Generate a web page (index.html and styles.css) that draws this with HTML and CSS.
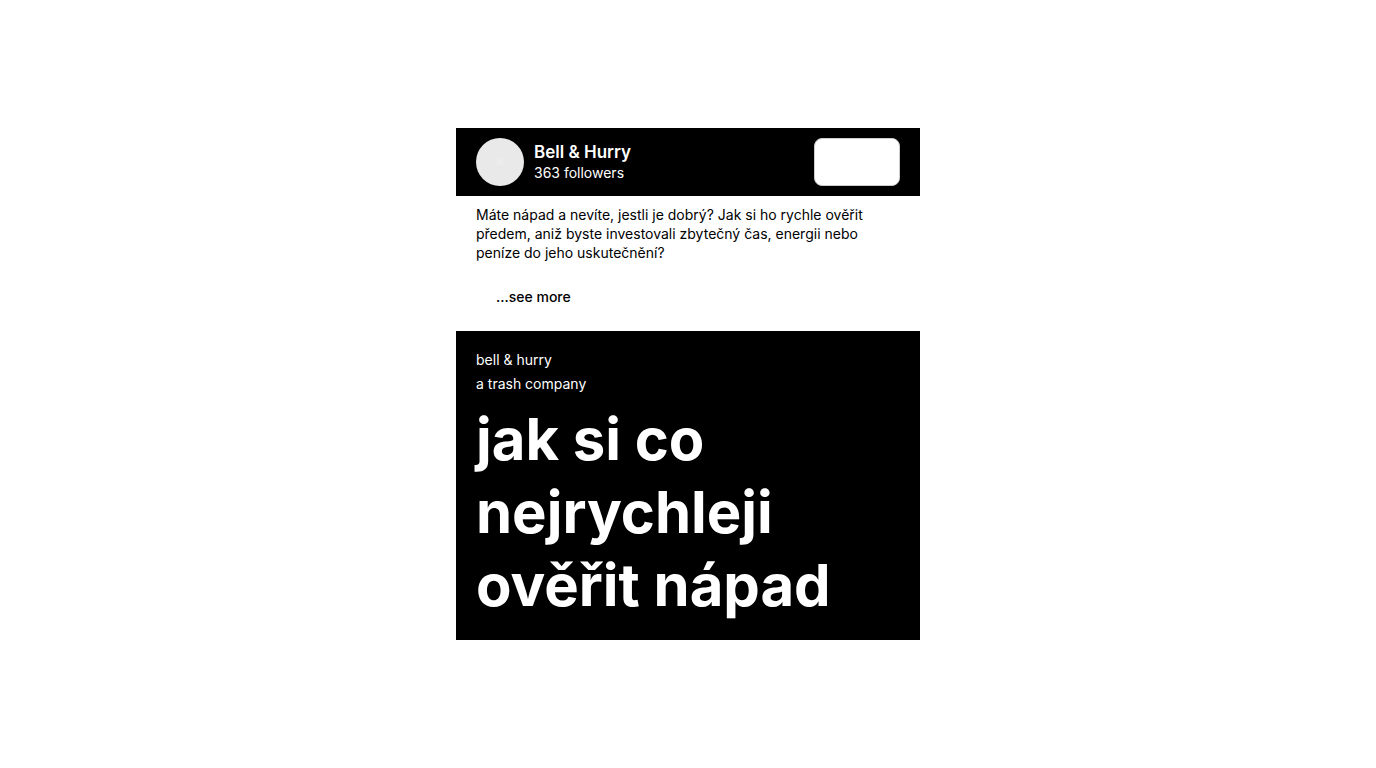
FILE: index.html
```
<!DOCTYPE html>
<html lang="cs">
<head>
<meta charset="utf-8">
<title>Bell &amp; Hurry</title>
<link rel="stylesheet" href="styles.css">
</head>
<body>
<main class="post">
  <header class="post-header">
    <div class="avatar"></div>
    <div class="account">
      <h2 class="name">Bell &amp; Hurry</h2>
      <p class="followers">363 followers</p>
    </div>
    <button class="follow" type="button" aria-label="Follow"></button>
  </header>
  <section class="post-text">
    <p class="copy">Máte nápad a nevíte, jestli je dobrý? Jak si ho rychle ověřit předem, aniž byste investovali zbytečný čas, energii nebo peníze do jeho uskutečnění?</p>
    <button class="more" type="button">...see more</button>
  </section>
  <section class="slide">
    <p class="brand">bell &amp; hurry</p>
    <p class="brand">a trash company</p>
    <h1 class="title">jak si co nejrychleji ověřit nápad</h1>
  </section>
</main>
</body>
</html>
```

FILE: styles.css
```
* { box-sizing: border-box; }
body {
  margin: 0;
  min-height: 100vh;
  display: flex;
  align-items: center;
  justify-content: center;
  background: #fff;
  color: #000;
  font-family: Inter, sans-serif;
  font-size: 14px;
}
p, h1, h2 { margin: 0; }
.post { width: 100%; max-width: 464px; }
.post-header {
  display: flex;
  align-items: center;
  gap: 10px;
  padding: 10px 20px;
  background: #000;
  color: #fff;
}
.avatar {
  width: 48px;
  height: 48px;
  border-radius: 50%;
  background: radial-gradient(circle, #eee 0, #e9e9e9 5px);
}
.account { flex: 1; }
.name { font-size: 17px; line-height: 22px; font-weight: 600; }
.followers { line-height: 20px; }
.follow {
  width: 86px;
  height: 48px;
  border: 1px solid #ccc;
  border-radius: 8px;
  background: #fff;
}
.post-text { padding: 9px 20px 10px; }
.copy { line-height: 19px; }
.more {
  margin-top: 11px;
  padding: 15px 20px;
  border: 0;
  background: none;
  color: inherit;
  font: 500 14px/18px Inter, sans-serif;
}
.slide { padding: 17px 20px 18px; background: #000; color: #fff; }
.brand { line-height: 24px; }
.title { margin-top: 7px; font-size: 58px; line-height: 73px; font-weight: 700; }
```
